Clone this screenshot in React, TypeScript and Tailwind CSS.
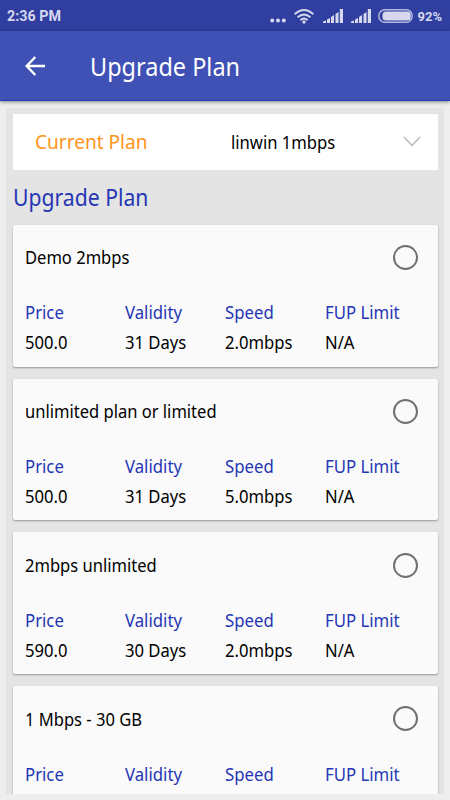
const plans = [
  { name: "Demo 2mbps", price: "500.0", validity: "31 Days", speed: "2.0mbps", limit: "N/A" },
  { name: "unlimited plan or limited", price: "500.0", validity: "31 Days", speed: "5.0mbps", limit: "N/A" },
  { name: "2mbps unlimited", price: "590.0", validity: "30 Days", speed: "2.0mbps", limit: "N/A" },
  { name: "1 Mbps - 30 GB", price: "", validity: "", speed: "", limit: "" },
];

function Signal() {
  return (
    <svg width="20" height="14" viewBox="0 0 20 14" fill="#d5d8ee">
      <path d="M0 14v-1.5l3-1V14zM4 14v-3.5l3-1.5v5zM8 14V8l3-2v8zM12.5 14V5l3-2v11z" />
      <path d="M16.8 0H20v14h-3.2z" />
    </svg>
  );
}

function StatusBar() {
  return (
    <div className="flex h-[31px] items-center bg-[#303f9f] pl-[7px] pr-2 pt-px font-[Roboto,sans-serif] text-[#d5d8ee]">
      <span className="text-[14.3px] font-bold leading-none">2:36 PM</span>
      <div className="ml-auto flex items-center">
        <svg className="mt-2 mr-[8px]" width="16" height="5" viewBox="0 0 16 5" fill="#d5d8ee">
          <circle cx="2.2" cy="2.5" r="2" /><circle cx="8" cy="2.5" r="2" /><circle cx="13.8" cy="2.5" r="2" />
        </svg>
        <svg className="mr-[9px]" width="20" height="15" viewBox="0 0 20 15" fill="none" stroke="#d5d8ee" strokeWidth="1.9">
          <path d="M.7 5.2Q10-3.2 19.3 5.2M3.6 8.3Q10 2.5 16.4 8.3M6.5 11.2Q10 8 13.5 11.2" />
          <circle cx="10" cy="13" r="1.7" fill="#d5d8ee" stroke="none" />
        </svg>
        <Signal />
        <span className="w-2" />
        <Signal />
        <svg className="ml-[7px] mr-[4px]" width="35" height="14" viewBox="0 0 35 14">
          <rect x=".8" y=".8" width="33.4" height="12.4" rx="6" fill="none" stroke="#b4b9e0" strokeWidth="1.4" />
          <rect x="4.5" y="2.6" width="28.3" height="8.8" rx="3.5" fill="#d5d8ee" />
        </svg>
        <span className="text-[13px] font-bold leading-none">92%</span>
      </div>
    </div>
  );
}

function Field({ label, value }: { label: string; value: string }) {
  return (
    <div className="w-[100px] whitespace-nowrap text-[17.6px] leading-[30px]">
      <div className="origin-left scale-x-[0.952] text-[#2536b4]">{label}</div>
      <div className="origin-left scale-x-[0.945] text-black">{value}</div>
    </div>
  );
}

function PlanCard({ plan }: { plan: (typeof plans)[number] }) {
  return (
    <div className="h-[141.8px] shrink-0 rounded-[2px] bg-[#fafafa] pl-[12.5px] shadow-[0_1px_2px_rgba(0,0,0,0.35)]">
      <div className="flex h-[65.4px] items-center justify-between pr-5">
        <span className="origin-left scale-x-[0.94] text-[17.6px] text-black">{plan.name}</span>
        <span className="size-[25px] rounded-full border-[2.5px] border-[#707070]" />
      </div>
      <div className="flex pt-[6.9px]">
        <Field label="Price" value={plan.price} />
        <Field label="Validity" value={plan.validity} />
        <Field label="Speed" value={plan.speed} />
        <Field label="FUP Limit" value={plan.limit} />
      </div>
    </div>
  );
}

export default function App() {
  return (
    <div className="flex h-[800px] w-[450px] flex-col overflow-hidden bg-[#eeeeee] font-['Noto_Sans',sans-serif]">
      <StatusBar />
      <header className="z-10 flex h-[70px] shrink-0 items-center border-b border-[#2539b5] bg-[#3f51b5] pl-[25px] text-white shadow-[0_1px_4px_rgba(0,0,0,0.45)]">
        <svg width="20" height="20" viewBox="0 0 20 20" fill="none" stroke="white" strokeWidth="2.4">
          <path d="M20 10H2M10.3 1L1.7 10l8.6 9" />
        </svg>
        <h1 className="ml-[45px] mt-0.5 origin-left scale-x-[0.92] text-[25.5px]">Upgrade Plan</h1>
      </header>
      <main className="mx-[6px] mt-[7px] mb-[6px] flex min-h-0 flex-1 flex-col overflow-hidden bg-[#e4e4e4] px-[6.5px] pt-[5.9px]">
        <div className="flex h-[56px] shrink-0 items-center bg-white pl-[22px] pr-[17px]">
          <span className="-mt-px w-[196px] origin-left scale-x-[0.93] text-[20.5px] text-[#ff9420]">Current Plan</span>
          <span className="origin-left scale-x-[0.945] text-[17.6px] text-black">linwin 1mbps</span>
          <svg className="ml-auto" width="18" height="11" viewBox="0 0 18 11" fill="none" stroke="#b9b9b9" strokeWidth="1.5">
            <path d="M1 1l8 8.5L17 1" />
          </svg>
        </div>
        <h2 className="flex h-[55px] shrink-0 origin-left scale-x-[0.92] items-center text-[23px] text-[#2536b4]">Upgrade Plan</h2>
        <div className="flex flex-col gap-3">
          {plans.map((p) => <PlanCard key={p.name} plan={p} />)}
        </div>
      </main>
    </div>
  );
}
